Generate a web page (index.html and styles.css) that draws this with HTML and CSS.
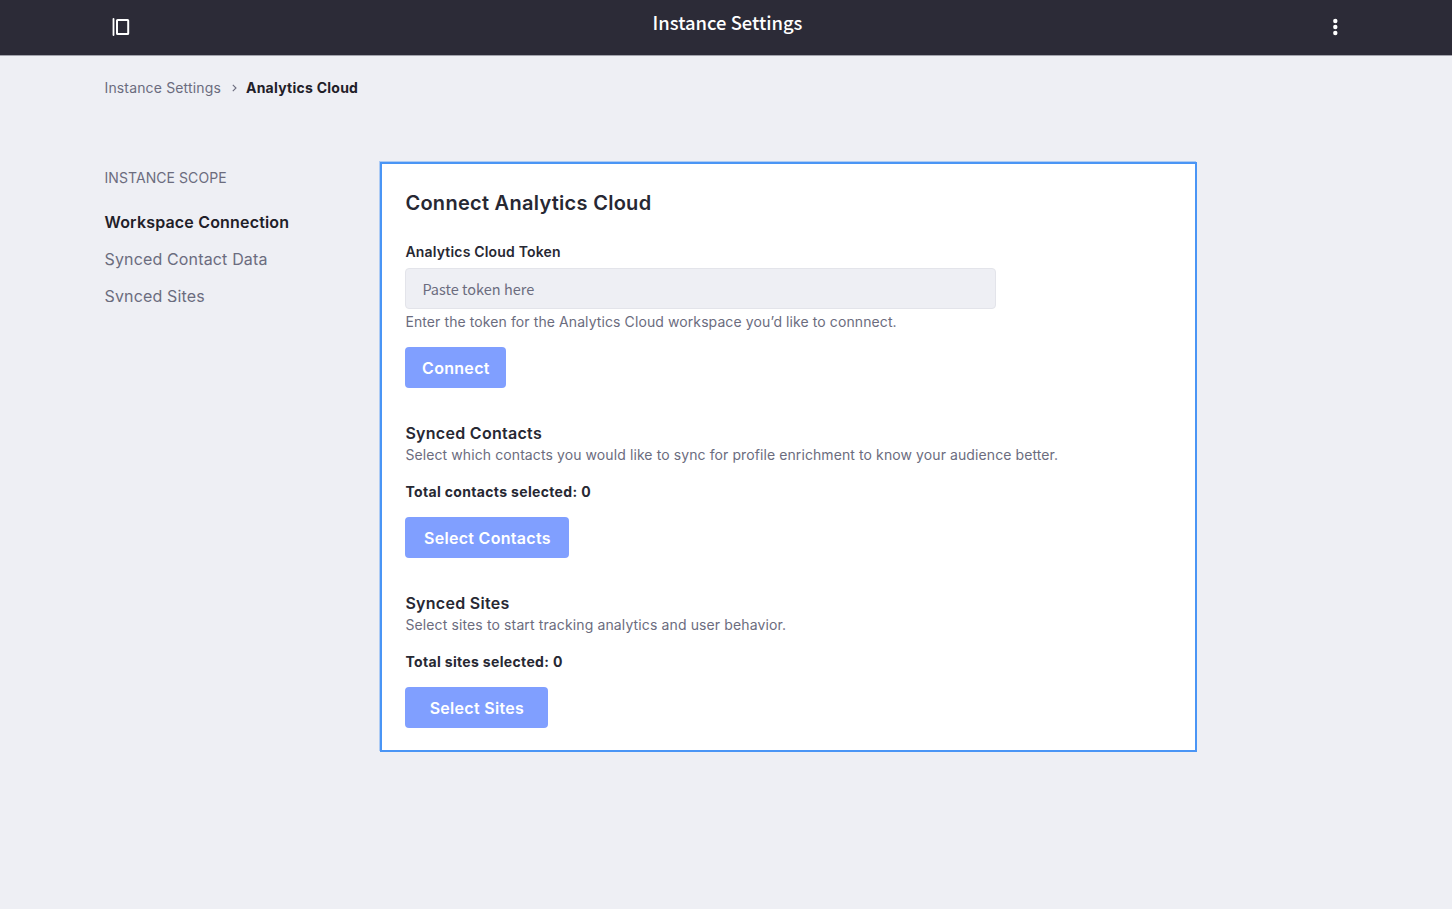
FILE: index.html
```html
<!DOCTYPE html>
<html lang="en">
<head>
<meta charset="utf-8">
<title>Instance Settings</title>
<link rel="stylesheet" href="styles.css">
</head>
<body>
<header class="topbar">
  <svg class="icon-panel" width="18" height="18" viewBox="0 0 18 18" fill="none" stroke="#fff"><path d="M1.5 1v16" stroke-width="1.8" stroke-linecap="round"/><rect x="5" y="1.9" width="11.2" height="14.2" rx=".6" stroke-width="2"/></svg>
  <h1 class="topbar-title">Instance Settings</h1>
  <svg class="icon-dots" width="6" height="18" viewBox="0 0 6 18" fill="#fff"><circle cx="3.3" cy="3" r="2.2"/><circle cx="3.3" cy="9" r="2.2"/><circle cx="3.3" cy="15" r="2.2"/></svg>
</header>
<nav class="breadcrumb">
  <span class="crumb">Instance Settings</span>
  <svg class="crumb-sep" width="5" height="8" viewBox="0 0 5 8" fill="none" stroke="#6b6c7e" stroke-width="1.1"><path d="M.8.8 4 4 .8 7.2"/></svg>
  <span class="crumb-current">Analytics Cloud</span>
</nav>
<div class="layout">
  <aside class="sidebar">
    <div class="scope">INSTANCE SCOPE</div>
    <div class="nav-item nav-active">Workspace Connection</div>
    <div class="nav-item">Synced Contact Data</div>
    <div class="nav-item nav-clipped">Synced Sites</div>
  </aside>
  <main class="card">
    <h2 class="card-title">Connect Analytics Cloud</h2>
    <label class="label" for="token">Analytics Cloud Token</label>
    <input class="token" id="token" placeholder="Paste token here">
    <p class="text help">Enter the token for the Analytics Cloud workspace you’d like to connnect.</p>
    <button class="btn btn-connect">Connect</button>
    <section class="section">
      <h3 class="section-title">Synced Contacts</h3>
      <p class="text desc">Select which contacts you would like to sync for profile enrichment to know your audience better.</p>
      <p class="total">Total contacts selected: 0</p>
      <button class="btn btn-contacts">Select Contacts</button>
    </section>
    <section class="section">
      <h3 class="section-title">Synced Sites</h3>
      <p class="text desc desc-sites">Select sites to start tracking analytics and user behavior.</p>
      <p class="total">Total sites selected: 0</p>
      <button class="btn btn-sites">Select Sites</button>
    </section>
  </main>
</div>
</body>
</html>
```
FILE: styles.css
```css
* { box-sizing: border-box; margin: 0; padding: 0; }
body { min-height: 909px; background: #eeeff4; color: #272833; font-family: Inter, "Liberation Sans", sans-serif; font-size: 14px; overflow: hidden; }
.topbar { height: 56px; background: #2c2b37; border-bottom: 1px solid #a2a3ac; display: flex; justify-content: space-between; padding: 18px 114px 0 112px; }
.topbar-title { font: 500 18.4px/24px "Noto Sans CJK SC", sans-serif; color: #fff; margin: -8px 7px 0 0; }
.breadcrumb { display: flex; align-items: center; height: 20px; margin: 21px 0 0 104.5px; }
.crumb { color: #6b6c7e; letter-spacing: .15px; }
.crumb-sep { margin: 2px 9px 0 11px; }
.crumb-current { font-weight: 700; color: #1f2028; letter-spacing: .25px; }
.layout { display: flex; align-items: flex-start; padding: 65px 0 0 104.5px; }
.sidebar { width: 275px; }
.scope { margin-top: 6px; height: 20px; line-height: 20px; color: #6b6c7e; letter-spacing: .07px; }
.nav-item { height: 24px; line-height: 24px; font-size: 16px; color: #6b6c7e; margin-top: 13px; letter-spacing: .15px; }
.nav-active { margin-top: 22px; font-weight: 600; color: #1f2028; letter-spacing: .18px; }
.nav-clipped { height: 18px; overflow: hidden; }
.card { width: 817px; height: 590px; border: 2px solid #4a95f5; box-shadow: -1px -1px 0 rgba(74, 149, 245, .4); background: #fff; padding: 25px 24px 24px 23.9px; display: flex; flex-direction: column; align-items: flex-start; margin-top: -.5px; }
.card > * { flex-shrink: 0; }
.card-title { font-size: 20px; line-height: 28px; font-weight: 600; letter-spacing: .28px; }
.label { font-weight: 600; line-height: 20px; margin-top: 25px; letter-spacing: .18px; }
.token { width: 591px; height: 41px; margin-top: 6px; border: 1px solid #e3e4ea; border-radius: 4px; background: #eeeff4; padding: 0 16px; font: 400 14.5px "Noto Sans CJK SC", sans-serif; }
.token::placeholder { color: #6b6c7e; opacity: 1; }
.text { color: #6b6c7e; line-height: 20px; letter-spacing: .095px; white-space: nowrap; }
.desc-sites { letter-spacing: .125px; }
.help { margin-top: 3px; }
.btn { height: 41px; margin-top: 15px; border: 0; border-radius: 4px; background: #809fff; color: #fff; font: 600 16px Inter, sans-serif; letter-spacing: .3px; padding-top: 1px; white-space: nowrap; }
.btn-connect { width: 101px; }
.btn-contacts { width: 164px; }
.btn-sites { width: 143px; }
.section { display: flex; flex-direction: column; align-items: flex-start; margin-top: 33px; }
.section-title { font-size: 16px; line-height: 24px; font-weight: 600; letter-spacing: .29px; }
.total { font-weight: 700; line-height: 20px; margin-top: 17px; letter-spacing: .34px; }
```
